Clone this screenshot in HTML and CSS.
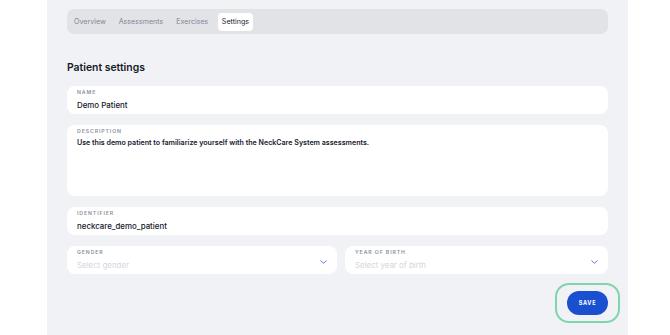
FILE: index.html
```html
<!DOCTYPE html>
<html lang="en">
<head>
<meta charset="UTF-8">
<meta name="viewport" content="width=device-width, initial-scale=1.0">
<title>Patient settings</title>
<link rel="stylesheet" href="styles.css">
</head>
<body>
<div class="page">
    <div class="tabs">
        <span class="tab">Overview</span>
        <span class="tab">Assessments</span>
        <span class="tab">Exercises</span>
        <span class="tab active">Settings</span>
    </div>

    <h2 class="title">Patient settings</h2>

    <div class="field">
        <div class="label">Name</div>
        <div class="value">Demo Patient</div>
    </div>
    <div class="field field-tall">
        <div class="label">Description</div>
        <div class="value small">Use this demo patient to familiarize yourself with the NeckCare System assessments.</div>
    </div>
    <div class="field">
        <div class="label">Identifier</div>
        <div class="value">neckcare_demo_patient</div>
    </div>
    <div class="row">
        <div class="field select gender">
            <div>
                <div class="label">Gender</div>
                <div class="value placeholder">Select gender</div>
            </div>
            <svg class="chevron" viewBox="0 0 10 6" width="7" height="4"><path d="M1 1l4 4 4-4" fill="none" stroke="#4c6fd8" stroke-width="1.4" stroke-linecap="round" stroke-linejoin="round"/></svg>
        </div>
        <div class="field select">
            <div>
                <div class="label">Year of birth</div>
                <div class="value placeholder">Select year of birth</div>
            </div>
            <svg class="chevron" viewBox="0 0 10 6" width="7" height="4"><path d="M1 1l4 4 4-4" fill="none" stroke="#4c6fd8" stroke-width="1.4" stroke-linecap="round" stroke-linejoin="round"/></svg>
        </div>
    </div>

    <div class="actions">
        <div class="focus-ring">
            <button class="save">Save</button>
        </div>
    </div>
</div>
</body>
</html>
```

FILE: styles.css
```css
body {
    font-family: Inter, 'Noto Sans', sans-serif;
    background-color: #ffffff;
    margin: 0;
}
.page {
    background-color: #f1f2f6;
    margin-left: 47px;
    width: 541px;
    min-height: 335px;
    padding: 9px 20px 0 20px;
    box-sizing: content-box;
}
.tabs {
    display: flex;
    align-items: center;
    background-color: #e2e3e7;
    border-radius: 7px;
    height: 25px;
    padding: 0 3px 0 0.5px;
}
.tab {
    font-size: 7.1px;
    color: #80869a;
    padding: 0 6.5px;
    line-height: 18px;
    border-radius: 4px;
}
.active {
    background-color: #ffffff;
    color: #1d2030;
    padding: 0 3.5px;
    margin-left: 3.5px;
}
.title {
    font-size: 10.4px;
    font-weight: 600;
    color: #171a26;
    margin: 25px 0 9px 0;
    line-height: 18px;
}
.field {
    background-color: #ffffff;
    border-radius: 8px;
    padding: 3px 10px 0 10px;
    height: 28px;
    box-sizing: border-box;
    margin-bottom: 11px;
}
.field-tall {
    height: 71px;
}
.label {
    font-size: 5.2px;
    font-weight: 600;
    letter-spacing: 0.9px;
    text-transform: uppercase;
    color: #8b8fa0;
    line-height: 7px;
}
.value {
    font-size: 7.9px;
    font-weight: 500;
    color: #15182a;
    line-height: 14px;
    margin-top: 1.5px;
}
.small {
    font-size: 7.1px;
    font-weight: 600;
    margin-top: 0.5px;
}
.placeholder {
    color: #d3d6de;
    font-weight: 400;
}
.row {
    display: flex;
    gap: 8px;
}
.select {
    flex: 1;
    display: flex;
    justify-content: space-between;
    align-items: center;
    padding-right: 10px;
}
.gender {
    flex: 0 0 270px;
}
.select > div {
    align-self: flex-start;
}
.chevron {
    display: block;
    margin-top: 1px;
}
.actions {
    display: flex;
    justify-content: flex-end;
    margin-top: -2px;
    margin-right: -12px;
}
.focus-ring {
    border: 2px solid #7fd6aa;
    border-radius: 14px;
    padding: 6px 10px;
}
.save {
    display: block;
    background-color: #1a4fcf;
    color: #ffffff;
    border: none;
    border-radius: 12px;
    width: 41px;
    height: 24px;
    font-family: Inter, sans-serif;
    font-size: 5.6px;
    font-weight: 700;
    letter-spacing: 0.7px;
    text-transform: uppercase;
    padding: 0;
}
```
